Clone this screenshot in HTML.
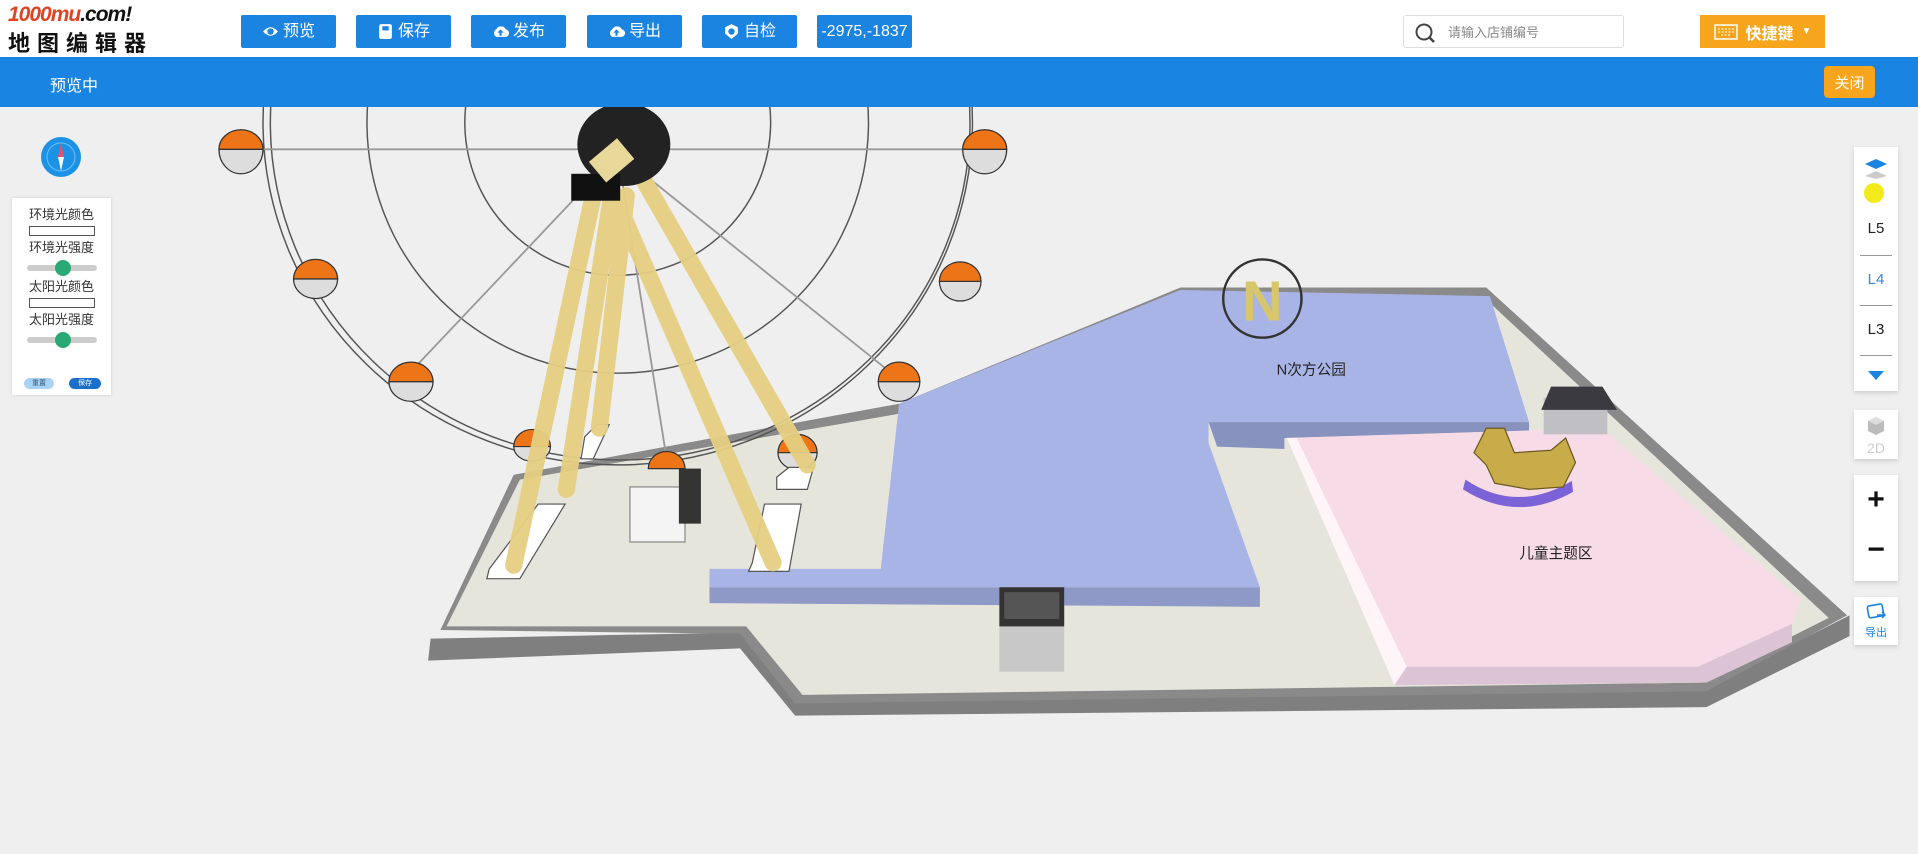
<!DOCTYPE html>
<html><head><meta charset="utf-8">
<style>
*{margin:0;padding:0;box-sizing:border-box}
body{width:1918px;height:854px;overflow:hidden;background:#efefef;font-family:"Liberation Sans","Noto Sans CJK SC",sans-serif;position:relative}
#hdr{position:absolute;left:0;top:0;width:1918px;height:57px;background:#fff}
.logo1{position:absolute;left:8px;top:3px;font:italic bold 21px "Liberation Sans",sans-serif;letter-spacing:-1px}
.logo2{position:absolute;left:8px;top:26px;font-size:22px;font-weight:bold;letter-spacing:7px;color:#111}
.btn{position:absolute;top:15px;height:33px;width:95px;background:#1a84e0;color:#fff;font-size:16px;line-height:16px;display:flex;align-items:center;justify-content:center;border-radius:2px;gap:4px}
.btn svg{width:17px;height:17px}
#search{position:absolute;left:1403px;top:15px;width:221px;height:33px;border:1px solid #ddd;border-radius:3px;font-size:13px;color:#888;display:flex;align-items:center;padding-left:44px}
#kb{position:absolute;left:1700px;top:15px;width:125px;height:33px;background:#f7a51d;color:#fff;font-size:16px;font-weight:bold;display:flex;align-items:center;justify-content:center;gap:8px}
#bar{position:absolute;left:0;top:57px;width:1918px;height:50px;background:#1a84e2}
#bar .t{position:absolute;left:50px;top:15px;color:#fff;font-size:16px}
#close{position:absolute;left:1824px;top:9px;width:51px;height:32px;background:#f7a51d;color:#fff;font-size:15px;border-radius:4px;display:flex;align-items:center;justify-content:center}
#scene{position:absolute;left:0;top:0}
#panel{position:absolute;left:12px;top:198px;width:99px;height:197px;background:#fff;box-shadow:0 0 3px #ccc;font-size:13px;color:#333;text-align:center}
#panel .l{height:17px;line-height:17px;margin-top:3px}
#panel .c{width:66px;height:10px;border:1px solid #555;margin:3px auto 0}
#panel .s{position:relative;width:70px;height:6px;background:#ccc;border-radius:3px;margin:9px auto 7px}
#panel .s i{position:absolute;left:28px;top:-5px;width:16px;height:16px;border-radius:50%;background:#2aa876}
#rt{position:absolute;left:1854px;top:147px;width:44px;height:244px;background:#fff;box-shadow:0 2px 4px #ccc;font-size:15px;text-align:center}
#rt .lv{position:absolute;left:6px;width:32px;height:50px;line-height:50px;color:#222}
.box{position:absolute;left:1854px;width:44px;background:#fff;box-shadow:0 2px 4px #ccc;text-align:center}
</style></head><body>
<svg id="scene" width="1918" height="854" viewBox="0 0 1568 698">
<defs><linearGradient id="tb" x1="0" x2="1"><stop offset="0" stop-color="#f3e6b0"/><stop offset="0.5" stop-color="#e8cf7c"/><stop offset="1" stop-color="#c9a94a"/></linearGradient></defs>
<rect width="1568" height="698" fill="#efefef"/>
<polygon points="352,522 350,540 605,530 650,585 1395,578 1512,520 1512,503 1395,562 650,572 605,517" fill="#7f7f7f"/>
<polygon points="360,515 420,388 735,330 965,235 1215,235 1510,503 1395,565 650,575 605,518" fill="#8a8a8a"/>
<polygon points="365,512 425,392 736,338 966,242 1212,242 1495,505 1390,558 656,568 610,512" fill="#e6e5dc"/>
<polygon points="735,330 965,237 1218,242 1250,345 988,345 988,362 1030,480 580,480 580,465 720,465" fill="#a9b4e6"/>
<polygon points="580,480 1030,480 1030,496 580,493" fill="#8e99c8"/>
<polygon points="988,345 1250,345 1250,352 1050,358 1050,367 995,365" fill="#8892bf"/>
<polygon points="1052,358 1310,350 1472,490 1465,510 1388,545 1140,545" fill="#f7dce8"/>
<polygon points="1140,545 1388,545 1465,510 1465,525 1395,558 1140,560" fill="#dcc4d6"/>
<polygon points="1052,358 1060,358 1150,545 1140,560" fill="#fff4f8"/>
<rect x="817" y="485" width="53" height="64" fill="#c8c8c8"/><rect x="817" y="480" width="53" height="32" fill="#333"/><rect x="821" y="484" width="45" height="22" fill="#555"/>
<rect x="1262" y="325" width="52" height="30" fill="#c0c0c4"/><polygon points="1268,316 1310,316 1322,335 1260,335" fill="#3a3a40"/>
<path d="M1198,392 Q1240,420 1285,393 L1286,402 Q1240,428 1196,400Z" fill="#7b62d6"/>
<path d="M1205,370 L1215,350 L1230,350 L1238,370 L1268,368 L1280,358 L1288,378 L1278,398 L1250,400 L1222,395 L1215,380Z" fill="#c9ac4a" stroke="#6b5a20"/>
<circle cx="1032" cy="244" r="32" fill="none" stroke="#333" stroke-width="2"/>
<text x="1032" y="262" font-family="Liberation Sans" font-weight="bold" font-size="46" fill="#d8c66a" text-anchor="middle">N</text>
<g fill="none" stroke="#555" stroke-width="1.2">
<ellipse cx="505" cy="100" rx="290" ry="280"/><ellipse cx="507" cy="100" rx="286" ry="276"/>
<ellipse cx="505" cy="100" rx="205" ry="205"/><ellipse cx="505" cy="100" rx="125" ry="125"/>
</g>
<g stroke="#999" stroke-width="1.5"><line x1="180" y1="122" x2="800" y2="122"/><line x1="505" y1="125" x2="330" y2="310"/><line x1="505" y1="125" x2="735" y2="310"/><line x1="505" y1="125" x2="545" y2="375"/></g>
<g>
<g transform="translate(197,122)"><path d="M-18,0 A18,16 0 0 1 18,0Z" fill="#ee7418" stroke="#333"/><path d="M-18,0 A18,20 0 0 0 18,0Z" fill="#ddd" stroke="#333"/></g>
<g transform="translate(258,228)"><path d="M-18,0 A18,16 0 0 1 18,0Z" fill="#ee7418" stroke="#333"/><path d="M-18,0 A18,16 0 0 0 18,0Z" fill="#ddd" stroke="#333"/></g>
<g transform="translate(336,312)"><path d="M-18,0 A18,16 0 0 1 18,0Z" fill="#ee7418" stroke="#333"/><path d="M-18,0 A18,16 0 0 0 18,0Z" fill="#ddd" stroke="#333"/></g>
<g transform="translate(435,365)"><path d="M-15,0 A15,14 0 0 1 15,0Z" fill="#ee7418" stroke="#333"/><path d="M-15,0 A15,12 0 0 0 15,0Z" fill="#ddd" stroke="#333"/></g>
<g transform="translate(545,383)"><path d="M-15,0 A15,14 0 0 1 15,0Z" fill="#ee7418" stroke="#333"/></g>
<g transform="translate(652,370)"><path d="M-16,0 A16,15 0 0 1 16,0Z" fill="#ee7418" stroke="#333"/><path d="M-16,0 A16,14 0 0 0 16,0Z" fill="#ddd" stroke="#333"/></g>
<g transform="translate(735,312)"><path d="M-17,0 A17,16 0 0 1 17,0Z" fill="#ee7418" stroke="#333"/><path d="M-17,0 A17,16 0 0 0 17,0Z" fill="#ddd" stroke="#333"/></g>
<g transform="translate(785,230)"><path d="M-17,0 A17,16 0 0 1 17,0Z" fill="#ee7418" stroke="#333"/><path d="M-17,0 A17,16 0 0 0 17,0Z" fill="#ddd" stroke="#333"/></g>
<g transform="translate(805,122)"><path d="M-18,0 A18,16 0 0 1 18,0Z" fill="#ee7418" stroke="#333"/><path d="M-18,0 A18,20 0 0 0 18,0Z" fill="#ddd" stroke="#333"/></g>
</g>
<polygon points="400,465 440,412 462,412 425,473 398,473" fill="#fff" stroke="#555"/>
<polygon points="478,357 488,347 498,347 485,375 475,375" fill="#fff" stroke="#555"/>
<polygon points="615,460 625,412 655,412 645,467 612,467" fill="#fff" stroke="#555"/>
<polygon points="635,390 645,382 665,382 660,400 635,400" fill="#fff" stroke="#555"/>
<rect x="515" y="398" width="45" height="45" fill="#f4f4f4" stroke="#888"/>
<rect x="555" y="383" width="18" height="45" fill="#333"/>
<g stroke="#e6cf82" stroke-width="14" stroke-linecap="round" opacity="0.95">
<line x1="485" y1="160" x2="420" y2="462"/><line x1="500" y1="160" x2="463" y2="400"/>
<line x1="512" y1="160" x2="490" y2="350"/><line x1="500" y1="155" x2="632" y2="460"/>
<line x1="525" y1="145" x2="660" y2="380"/>
</g>
<ellipse cx="510" cy="118" rx="38" ry="34" fill="#222"/>
<rect x="467" y="142" width="40" height="22" fill="#111"/>
<rect x="485" y="120" width="30" height="22" fill="#e8d99a" transform="rotate(-40 500 131)"/>
<text x="1072" y="306" font-size="12" fill="#222" text-anchor="middle" font-family="Liberation Sans,Noto Sans CJK SC,sans-serif">N次方公园</text>
<text x="1272" y="456" font-size="12" fill="#222" text-anchor="middle" font-family="Liberation Sans,Noto Sans CJK SC,sans-serif">儿童主题区</text>
</svg>

<div id="hdr">
<div class="logo1"><span style="color:#d42">1000mu</span><span style="color:#111">.com!</span></div>
<div class="logo2">地图编辑器</div>
<div class="btn" style="left:241px"><svg viewBox="0 0 16 16"><path d="M1 8Q8 0 15 8Q8 16 1 8Z" fill="#fff"/><circle cx="8" cy="8" r="3" fill="#1a84e0"/></svg>预览</div>
<div class="btn" style="left:356px"><svg viewBox="0 0 16 16"><rect x="2" y="1" width="12" height="14" rx="2" fill="#fff"/><rect x="5" y="3" width="6" height="4" fill="#1a84e0"/></svg>保存</div>
<div class="btn" style="left:471px"><svg viewBox="0 0 16 16"><path d="M4 13A4 4 0 0 1 4 6A5 5 0 0 1 13 6A3.5 3.5 0 0 1 12 13Z" fill="#fff"/><path d="M8 6L5 9H7V12H9V9H11Z" fill="#1a84e0"/></svg>发布</div>
<div class="btn" style="left:587px"><svg viewBox="0 0 16 16"><path d="M4 13A4 4 0 0 1 4 6A5 5 0 0 1 13 6A3.5 3.5 0 0 1 12 13Z" fill="#fff"/><path d="M8 6L5 9H7V12H9V9H11Z" fill="#1a84e0"/></svg>导出</div>
<div class="btn" style="left:702px"><svg viewBox="0 0 16 16"><path d="M8 1L14 4V10L8 15L2 10V4Z" fill="#fff"/><circle cx="8" cy="8" r="3" fill="#1a84e0"/></svg>自检</div>
<div class="btn" style="left:817px">-2975,-1837</div>
<div id="search"><svg style="position:absolute;left:10px;top:6px" width="22" height="22" viewBox="0 0 22 22"><circle cx="10" cy="10" r="7.5" fill="none" stroke="#444" stroke-width="2"/><line x1="15" y1="15" x2="20" y2="20" stroke="#444" stroke-width="2.5"/></svg>请输入店铺编号</div>
<div id="kb"><svg width="24" height="16" viewBox="0 0 24 16"><rect x="1" y="1" width="22" height="14" fill="none" stroke="#fff" stroke-width="1.5"/><path d="M4 5H20M4 8H20M7 11H17" stroke="#fff" stroke-dasharray="2 1.5"/></svg>快捷键 <span style="font-size:10px">▼</span></div>
</div>
<div id="bar"><div class="t">预览中</div><div id="close">关闭</div></div>

<svg style="position:absolute;left:41px;top:137px" width="40" height="40" viewBox="0 0 40 40"><circle cx="20" cy="20" r="20" fill="#1b92e6"/><circle cx="20" cy="20" r="14" fill="none" stroke="#6cc0f5"/><path d="M20 6L23 20H17Z" fill="#e9506b"/><path d="M20 34L23 20H17Z" fill="#fff"/></svg>
<div id="panel">
<div class="l" style="margin-top:8px">环境光颜色</div><div class="c"></div>
<div class="l">环境光强度</div><div class="s"><i></i></div>
<div class="l">太阳光颜色</div><div class="c"></div>
<div class="l">太阳光强度</div><div class="s"><i></i></div>
<div style="position:absolute;left:12px;top:180px;width:30px;height:11px;background:#a9d3f5;border-radius:6px;font-size:7px;color:#357;line-height:11px">重置</div>
<div style="position:absolute;left:57px;top:180px;width:32px;height:11px;background:#1a6fc9;border-radius:6px;font-size:7px;color:#fff;line-height:11px">保存</div>
</div>

<div id="rt">
<svg style="position:absolute;left:10px;top:12px" width="24" height="20" viewBox="0 0 24 20"><path d="M12 12L23 17L12 20L1 17Z" fill="#ccc"/><path d="M12 0L23 5L12 10L1 5Z" fill="#1a84e0"/></svg>
<div style="position:absolute;left:10px;top:36px;width:20px;height:20px;border-radius:50%;background:#f3ea1a"></div>
<div class="lv" style="top:57px">L5</div>
<div style="position:absolute;left:6px;top:108px;width:32px;border-top:1px solid #999"></div>
<div class="lv" style="top:108px;color:#3388dd">L4</div>
<div style="position:absolute;left:6px;top:158px;width:32px;border-top:1px solid #999"></div>
<div class="lv" style="top:158px">L3</div>
<div style="position:absolute;left:6px;top:208px;width:32px;border-top:1px solid #999"></div>
<div style="position:absolute;left:14px;top:224px;width:0;height:0;border-left:8px solid transparent;border-right:8px solid transparent;border-top:9px solid #1a84e0"></div>
</div>
<div class="box" style="top:410px;height:49px"><svg style="margin-top:6px" width="18" height="20" viewBox="0 0 18 20"><path d="M9 1L17 5V15L9 19L1 15V5Z" fill="#bbb"/><path d="M9 1L17 5L9 9L1 5Z" fill="#ddd"/></svg><div style="font-size:14px;color:#ccc;line-height:14px">2D</div></div>
<div class="box" style="top:475px;height:106px;font-size:30px;font-weight:bold;color:#111"><div style="line-height:50px">+</div><div style="line-height:50px">−</div></div>
<div class="box" style="top:597px;height:48px"><svg style="margin-top:5px" width="22" height="20" viewBox="0 0 22 20"><rect x="3" y="3" width="15" height="12" rx="2" fill="none" stroke="#1a84e0" stroke-width="1.6" transform="rotate(-10 10 9)"/><path d="M12 13H20M17 10L20 13L17 16" stroke="#1a84e0" fill="none" stroke-width="1.5"/></svg><div style="font-size:11px;color:#1a84e0;line-height:12px">导出</div></div>
</body></html>
